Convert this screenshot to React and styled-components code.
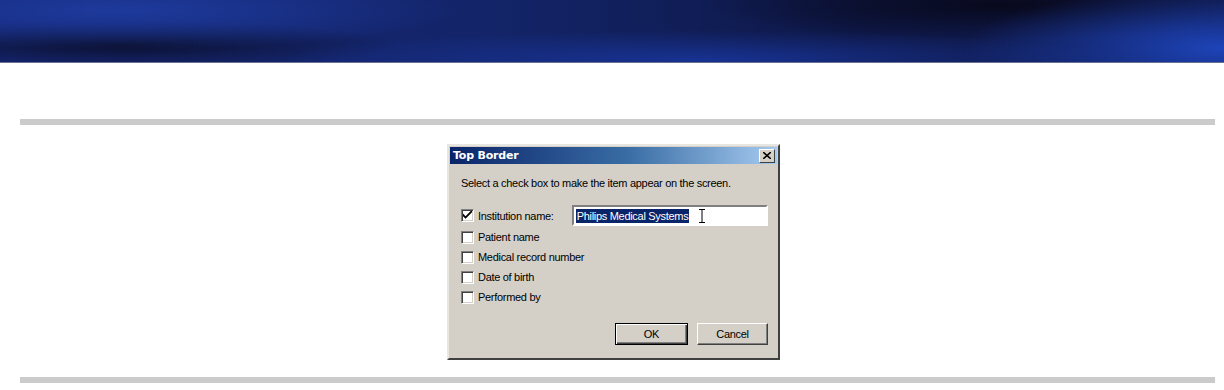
import styled, { createGlobalStyle } from 'styled-components';

const GlobalStyle = createGlobalStyle`
  body {
    margin: 0;
    background: #fff;
    font-family: "Liberation Sans", Arial, sans-serif;
  }
`;

const Page = styled.div`
  width: 1224px;
  height: 390px;
  overflow: hidden;
`;

const Banner = styled.header`
  height: 62px;
  background:
    radial-gradient(ellipse 260px 60px at 1224px 48px, rgba(30, 70, 190, 0.95), transparent),
    radial-gradient(ellipse 340px 40px at 120px 10px, rgba(30, 60, 160, 0.9), transparent),
    radial-gradient(ellipse 420px 30px at 700px 60px, rgba(25, 55, 160, 0.8), transparent),
    radial-gradient(ellipse 300px 35px at 1000px 5px, rgba(8, 8, 25, 0.95), transparent),
    radial-gradient(ellipse 280px 25px at 120px 45px, rgba(10, 14, 40, 0.9), transparent),
    linear-gradient(90deg, #16287a 0%, #132468 40%, #0e1848 70%, #101a50 100%);
  border-bottom: 1px solid #6a7090;
`;

const Rule = styled.hr`
  border: none;
  height: 6px;
  background: #cbcbcb;
  margin: ${(p) => p.$top}px 9px 0 20px;
`;

const DialogArea = styled.div`
  display: flex;
  justify-content: center;
  padding: 19px 0 17px 3px;
`;

const Dialog = styled.div`
  width: 327px;
  height: 210px;
  background: #d4d0c8;
  border: 2px solid;
  border-color: #e8e6e0 #404040 #404040 #e8e6e0;
  padding: 1px;
  box-sizing: content-box;
  display: flex;
  flex-direction: column;
  font-size: 11px;
  letter-spacing: -0.3px;
  color: #000;
`;

const TitleBar = styled.div`
  height: 17px;
  background: linear-gradient(90deg, #0a246a 0%, #3a6ea5 55%, #a6caf0 100%);
  display: flex;
  align-items: center;
  justify-content: space-between;
  padding: 0 2px 0 3px;
`;

const Title = styled.span`
  color: #fff;
  font-weight: bold;
  font-size: 11px;
  font-family: "DejaVu Sans", sans-serif;
  letter-spacing: -0.2px;
`;

const CloseButton = styled.div`
  width: 14px;
  height: 12px;
  background: #d4d0c8;
  border: 1px solid;
  border-color: #fff #404040 #404040 #fff;
  display: flex;
  align-items: center;
  justify-content: center;
`;

const Body = styled.div`
  flex: 1;
  padding: 13px 9px 12px 11px;
  display: flex;
  flex-direction: column;
`;

const Intro = styled.p`
  margin: 0 0 15px;
  font-size: 11px;
`;

const Row = styled.div`
  display: flex;
  align-items: center;
  height: ${(p) => (p.$tall ? 23 : 20)}px;
`;

const Box = styled.span`
  width: 11px;
  height: 11px;
  background: #fff;
  border: 1px solid;
  border-color: #808080 #fff #fff #808080;
  box-shadow: inset 1px 1px 0 #404040, inset -1px -1px 0 #d4d0c8;
  display: flex;
  align-items: center;
  justify-content: center;
  margin-right: 4px;
`;

const Label = styled.span`
  width: 94px;
  white-space: nowrap;
`;

const Field = styled.div`
  width: 191px;
  height: 17px;
  background: #fff;
  border: 2px solid;
  border-color: #808080 #fff #fff #808080;
  display: flex;
  align-items: center;
  padding-left: 2px;
`;

const Selected = styled.span`
  background: #0a246a;
  color: #fff;
  padding: 0 1px;
  line-height: 14px;
`;

const Buttons = styled.div`
  margin-top: auto;
  display: flex;
  justify-content: flex-end;
  gap: 9px;
`;

const Button = styled.button`
  width: ${(p) => (p.$default ? 73 : 71)}px;
  height: 22px;
  background: #d4d0c8;
  font-family: "Liberation Sans", Arial, sans-serif;
  font-size: 11px;
  letter-spacing: -0.3px;
  color: #000;
  padding: 0;
  border: 1px solid;
  border-color: ${(p) => (p.$default ? '#000' : '#fff #404040 #404040 #fff')};
  box-shadow: ${(p) =>
    p.$default
      ? 'inset 1px 1px 0 #fff, inset -1px -1px 0 #404040, inset -2px -2px 0 #808080'
      : 'inset -1px -1px 0 #808080'};
`;

const Check = () => (
  <svg width="9" height="9" viewBox="0 0 7 7">
    <path d="M0 2 L0 4 L2 6 L7 1 L7 -1 L2 4 Z" fill="#000" />
  </svg>
);

const items = ['Patient name', 'Medical record number', 'Date of birth', 'Performed by'];

export default function App() {
  return (
    <Page>
      <GlobalStyle />
      <Banner />
      <Rule $top={56} />
      <DialogArea>
        <Dialog>
          <TitleBar>
            <Title>Top Border</Title>
            <CloseButton>
              <svg width="8" height="7" viewBox="0 0 8 7">
                <path d="M0 0 L8 7 M8 0 L0 7" stroke="#000" strokeWidth="1.6" />
              </svg>
            </CloseButton>
          </TitleBar>
          <Body>
            <Intro>Select a check box to make the item appear on the screen.</Intro>
            <Row $tall>
              <Box>
                <Check />
              </Box>
              <Label>Institution name:</Label>
              <Field>
                <Selected>Philips Medical Systems</Selected>
                <svg width="6" height="14" viewBox="0 0 6 14" style={{ marginLeft: 10 }}>
                  <path d="M0 0.5 H6 M0 13.5 H6 M3 0.5 V13.5" stroke="#000" strokeWidth="1" />
                </svg>
              </Field>
            </Row>
            {items.map((t) => (
              <Row key={t}>
                <Box />
                <Label>{t}</Label>
              </Row>
            ))}
            <Buttons>
              <Button $default>OK</Button>
              <Button>Cancel</Button>
            </Buttons>
          </Body>
        </Dialog>
      </DialogArea>
      <Rule $top={0} />
    </Page>
  );
}
